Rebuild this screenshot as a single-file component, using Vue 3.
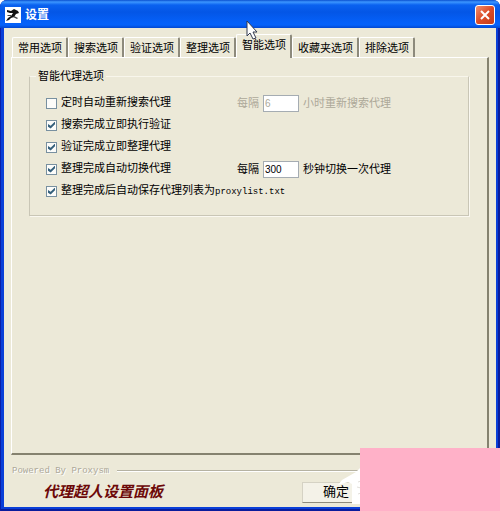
<template>
  <div class="window">
    <header class="title-bar">
      <svg class="app-icon" viewBox="0 0 16 16" aria-hidden="true">
        <rect width="16" height="16" fill="#fff" />
        <path d="M2 3l4 1 3-2 4 2 1 2-3 1-2 3-3 1-2 2-3 1 2-3 3-2 2-3-3 0-3-1z" fill="#111" />
        <path d="M9 9l4 2-1 1-4-2zM3 8h3v1H2z" fill="#444" />
      </svg>
      <h1 class="title">设置</h1>
      <button class="close" type="button" aria-label="关闭">
        <svg viewBox="0 0 18 18" aria-hidden="true">
          <path d="M5 5l8 8M13 5l-8 8" stroke="#fff" stroke-width="2" />
        </svg>
      </button>
    </header>

    <main class="client">
      <div class="tabs" role="tablist">
        <button
          v-for="(tab, index) in tabs"
          :key="tab"
          class="tab"
          :class="{ 'tab--active': activeTab === index }"
          type="button"
          role="tab"
          :aria-selected="activeTab === index"
          @click="activeTab = index"
        >
          {{ tab }}
        </button>
      </div>

      <section class="page" role="tabpanel">
        <fieldset class="group">
          <legend>智能代理选项</legend>
          <div v-for="option in options" :key="option.id" class="row">
            <label class="check">
              <input v-model="option.checked" type="checkbox" />
              <span>{{ option.text }}<span class="latin">{{ option.file }}</span></span>
            </label>
            <div v-if="option.unit" class="interval" :class="{ 'interval--off': !option.checked }">
              <label :for="option.id">每隔</label>
              <input :id="option.id" v-model="option.value" type="text" :disabled="!option.checked" />
              <span>{{ option.unit }}</span>
            </div>
          </div>
        </fieldset>
      </section>

      <div class="powered">
        <span class="latin">Powered By Proxysm</span>
      </div>

      <footer class="footer">
        <strong class="brand">代理超人设置面板</strong>
        <button class="ok" type="button">确定</button>
      </footer>
    </main>

    <svg class="wisp" viewBox="0 0 24 40" aria-hidden="true">
      <path d="M24 0L18 6 4 14 0 19l10-3 4 2v20h10z" fill="#fff" />
      <path d="M20 16l3-1M19 21l4 1M20 28l3-1" stroke="#e2dfda" />
    </svg>
    <div class="cover"></div>

    <svg class="cursor" viewBox="0 0 12 20" aria-hidden="true">
      <path d="M1 1v15l3-3 3 6 3-1-3-6h4z" fill="#fff" stroke="#333a50" />
    </svg>
  </div>
</template>

<script setup>
import { ref } from 'vue'

const tabs = ['常用选项', '搜索选项', '验证选项', '整理选项', '智能选项', '收藏夹选项', '排除选项']
const activeTab = ref(4)

const options = ref([
  { id: 'search', text: '定时自动重新搜索代理', checked: false, value: '6', unit: '小时重新搜索代理' },
  { id: 'verify', text: '搜索完成立即执行验证', checked: true },
  { id: 'sort', text: '验证完成立即整理代理', checked: true },
  { id: 'switch', text: '整理完成自动切换代理', checked: true, value: '300', unit: '秒钟切换一次代理' },
  { id: 'save', text: '整理完成后自动保存代理列表为', file: 'proxylist.txt', checked: true }
])
</script>

<style>
body {
  background: #fff;
}
</style>

<style scoped>
.window {
  position: relative;
  box-sizing: border-box;
  min-height: 100vh;
  display: flex;
  flex-direction: column;
  padding: 0 4px 4px;
  background: #0a3fd8;
  border-radius: 7px 7px 0 0;
  box-shadow: inset 1px 0 #0a1fa8, inset -2px -2px #0a1c9c;
  font-family: "Liberation Sans", "Noto Sans CJK SC", sans-serif;
  font-size: 11px;
  line-height: 16px;
  color: #000;
  overflow: hidden;
}

button,
input {
  font: inherit;
  color: inherit;
}

/* 标题栏 */
.title-bar {
  display: flex;
  align-items: center;
  height: 28px;
  margin: 0 -4px;
  padding: 2px 5px 0;
  box-sizing: border-box;
  background: linear-gradient(#0a50d0 0, #3c96ff 2px, #0a62f0 5px, #0456e6 12px, #0560f8 22px, #0562fa 25px, #0348d0 28px);
}

.app-icon {
  width: 16px;
  height: 16px;
}

.title {
  flex: 1;
  margin: 0 0 0 4px;
  font-size: 12px;
  font-weight: 700;
  color: #fff;
}

.close {
  width: 20px;
  height: 20px;
  padding: 0;
  border: 1px solid #fff;
  border-radius: 3px;
  background: linear-gradient(135deg, #f09070, #dc4c28 50%, #c43c18);
}

.close svg {
  display: block;
  width: 18px;
  height: 18px;
}

.client {
  flex: 1;
  display: flex;
  flex-direction: column;
  padding: 7px 7px 2px;
  background: #ece9d8;
}

/* 选项卡 */
.tabs {
  display: flex;
  align-items: flex-end;
  height: 22px;
  padding-left: 1px;
}

.tab {
  height: 20px;
  padding: 0 4px 0 5px;
  border: 0;
  border-top: 1px solid #fff;
  border-left: 1px solid #fff;
  border-right: 2px solid #8d8a7c;
  border-radius: 2px 2px 0 0;
  background: #ece9d8;
  line-height: 18px;
  white-space: nowrap;
}

.tab--active {
  position: relative;
  height: 24px;
  margin-bottom: -1px;
  padding-bottom: 4px;
}

.page {
  flex: 1;
  padding: 10px 18px 10px 17px;
  border: 1px solid #fff;
  border-right: 2px solid #85826f;
  border-bottom: 2px solid #85826f;
}

.group {
  min-width: 0;
  margin: 0;
  padding: 8px 16px 13px;
  border: 1px solid #c9c6b6;
  border-top-color: #f8f6ec;
  box-shadow: 1px 1px #faf8f0;
}

.group legend {
  padding: 0 2px;
  margin-left: -10px;
}

.row {
  display: flex;
  align-items: center;
  height: 22px;
}

.check {
  display: flex;
  align-items: center;
  gap: 4px;
  min-width: 191px;
  white-space: nowrap;
}

.check input {
  appearance: none;
  display: grid;
  place-items: center;
  width: 11px;
  height: 11px;
  margin: 0;
  border: 1px solid #7890a0;
  background: #fcfcfa;
}

.check input:checked::before {
  content: "";
  width: 7px;
  height: 7px;
  background: #35607c;
  clip-path: polygon(0 35%, 38% 62%, 100% 0, 100% 38%, 38% 100%, 0 75%);
}

.interval {
  display: flex;
  align-items: center;
  gap: 4px;
  white-space: nowrap;
}

.interval input {
  box-sizing: border-box;
  width: 36px;
  height: 17px;
  padding: 0 1px;
  border: 1px solid #a5acb2;
  border-radius: 0;
  background: #fff;
  font-size: 10px;
}

.interval--off,
.interval--off input {
  color: #aca899;
}

.latin {
  font-family: "Liberation Mono", monospace;
  font-size: 9px;
}

/* 底部 */
.powered {
  display: flex;
  align-items: center;
  gap: 8px;
  margin-top: 8px;
  padding-left: 1px;
  color: #aca899;
  text-shadow: 1px 1px #fff;
}

.powered::after {
  content: "";
  flex: 1;
  border-top: 1px solid #b5b2a2;
  border-bottom: 1px solid #fff;
}

.footer {
  display: flex;
  align-items: center;
  gap: 139px;
  height: 26px;
  padding-left: 32px;
}

.brand {
  font-size: 15px;
  font-style: italic;
  color: #6c0808;
  white-space: nowrap;
}

.ok {
  width: 68px;
  height: 21px;
  padding: 0;
  border: 1px solid #d5d2c4;
  border-bottom-color: #8d8a7c;
  background: #f4f2e8;
  font-size: 13px;
  line-height: 18px;
}

/* 遮挡层 */
.cover {
  position: absolute;
  right: 0;
  bottom: 0;
  width: 140px;
  height: 63px;
  background: #ffb1c8;
}

.wisp {
  position: absolute;
  right: 138px;
  bottom: 5px;
  width: 24px;
  height: 40px;
}

.cursor {
  position: absolute;
  top: 20px;
  left: 246px;
  width: 12px;
  height: 20px;
}
</style>
